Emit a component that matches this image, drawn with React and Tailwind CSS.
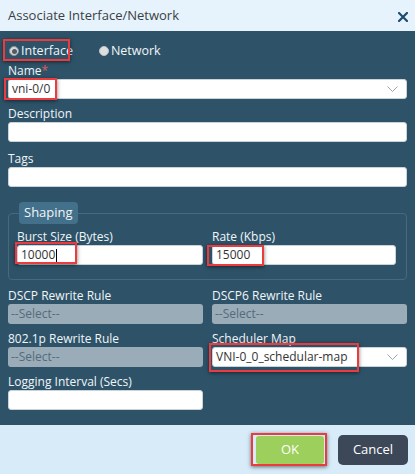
import React from "react";

const font = { fontFamily: '"Open Sans", "Liberation Sans", sans-serif' };

function Chevron() {
  return (
    <svg width="11" height="6" viewBox="0 0 11 6" className="absolute right-[8px] top-1/2 -translate-y-1/2">
      <path d="M0.5 0.5 L5.5 5.5 L10.5 0.5" fill="none" stroke="#9aa4ab" strokeWidth="1" />
    </svg>
  );
}

function Mark({ className }) {
  return (
    <div
      className={
        "pointer-events-none absolute border-[2.5px] border-[#ec3b3f] shadow-[0_1px_4px_rgba(0,0,0,0.55)] " +
        className
      }
    />
  );
}

function Label({ children, req }) {
  return (
    <div className="h-[16px] text-[12px] leading-[16px] text-[#f1f5f8]">
      {children}
      {req && <span className="text-[#e0585a]">*</span>}
    </div>
  );
}

function TextBox({ value, cursor }) {
  return (
    <div className="flex h-[20px] items-center rounded-[3px] border border-[#c9d3d9] bg-white pl-[3px] text-[12px] text-[#333]">
      {value}
      {cursor && <span className="ml-[1px] inline-block h-[13px] w-[1px] bg-black" />}
    </div>
  );
}

function Dropdown({ value }) {
  return (
    <div className="relative flex h-[20px] items-center rounded-[3px] border border-[#c9d3d9] bg-white pl-[3px] text-[12px] text-[#333]">
      {value}
      <Chevron />
    </div>
  );
}

function Disabled() {
  return (
    <div className="flex h-[20px] items-center rounded-[3px] bg-[#99acb8] pl-[3px] text-[12px] text-[#566b79]">
      --Select--
    </div>
  );
}

export default function App() {
  return (
    <div style={font} className="relative h-[474px] w-[415px] overflow-hidden bg-[#2e5369]">
      {/* title bar */}
      <div className="flex h-[31px] items-center justify-between bg-[#e6f3fc] pl-[8px] pr-[7px]">
        <span className="text-[13px] text-[#3a3f44]">Associate Interface/Network</span>
        <svg width="10" height="10" viewBox="0 0 10 10" className="mt-[3px]">
          <path d="M1 1 L9 9 M9 1 L1 9" stroke="#1b4c70" strokeWidth="2.2" strokeLinecap="square" />
        </svg>
      </div>

      {/* form body */}
      <div className="h-[394px] px-[8px] pt-[9px]">
        <div className="relative flex h-[22px] items-center text-[12.5px] text-[#f1f5f8]">
          <span className="ml-[1px] mr-[2px] flex h-[10px] w-[10px] items-center justify-center rounded-full border border-[#8e9498] bg-[#d5d8da]">
            <span className="h-[5px] w-[5px] rounded-full bg-[#555a5e]" />
          </span>
          <span>Interface</span>
          <span className="ml-[26px] mr-[2px] h-[10px] w-[10px] rounded-full border border-[#bfc3c6] bg-[#dcdedf]" />
          <span>Network</span>
          <Mark className="-left-[5px] -top-[1px] h-[22px] w-[67px]" />
        </div>

        <div className="relative mt-[1px]">
          <Label req>Name</Label>
          <Dropdown value="vni-0/0" />
          <Mark className="-left-[4px] top-[15px] h-[22px] w-[53px]" />
        </div>

        <div className="mt-[7px]">
          <Label>Description</Label>
          <TextBox value="" />
        </div>

        <div className="mt-[9px]">
          <Label>Tags</Label>
          <TextBox value="" />
        </div>

        {/* shaping group */}
        <div className="relative mt-[26px] h-[67px] rounded-[4px] border border-[#48697d] pl-[8px] pr-[10px] pt-[15px]">
          <div className="absolute -top-[12px] left-[10px] flex h-[22px] items-center rounded-[4px] bg-[#43708a] px-[5px] text-[13px] text-[#f1f5f8]">
            Shaping
          </div>
          <div className="grid grid-cols-[186px_1fr] gap-x-[9px]">
            <div className="relative">
              <Label>Burst Size (Bytes)</Label>
              <TextBox value="10000" cursor />
              <Mark className="-left-[2px] top-[13px] h-[22px] w-[62px]" />
            </div>
            <div className="relative">
              <Label>Rate (Kbps)</Label>
              <TextBox value="15000" />
              <Mark className="-left-[5px] top-[16px] h-[21px] w-[57px]" />
            </div>
          </div>
        </div>

        <div className="mt-[8px] grid grid-cols-2 gap-x-[9px] gap-y-[7px]">
          <div>
            <Label>DSCP Rewrite Rule</Label>
            <Disabled />
          </div>
          <div>
            <Label>DSCP6 Rewrite Rule</Label>
            <Disabled />
          </div>
          <div>
            <Label>802.1p Rewrite Rule</Label>
            <Disabled />
          </div>
          <div className="relative">
            <Label>Scheduler Map</Label>
            <Dropdown value="VNI-0_0_schedular-map" />
            <Mark className="-left-[3px] top-[12px] h-[29px] w-[150px]" />
          </div>
          <div>
            <Label>Logging Interval (Secs)</Label>
            <TextBox value="" />
          </div>
        </div>
      </div>

      {/* footer */}
      <div className="flex h-[49px] items-center justify-end gap-[14px] bg-[#d7ecf8] pr-[7px]">
        <div className="relative">
          <button className="h-[28px] w-[68px] rounded-[3px] bg-[#9dcf5c] text-[13px] text-white">OK</button>
          <Mark className="-left-[5px] -top-[3px] h-[33px] w-[76px]" />
        </div>
        <button className="h-[30px] w-[70px] rounded-[5px] bg-[#3c4858] text-[13px] text-white">Cancel</button>
      </div>
    </div>
  );
}
